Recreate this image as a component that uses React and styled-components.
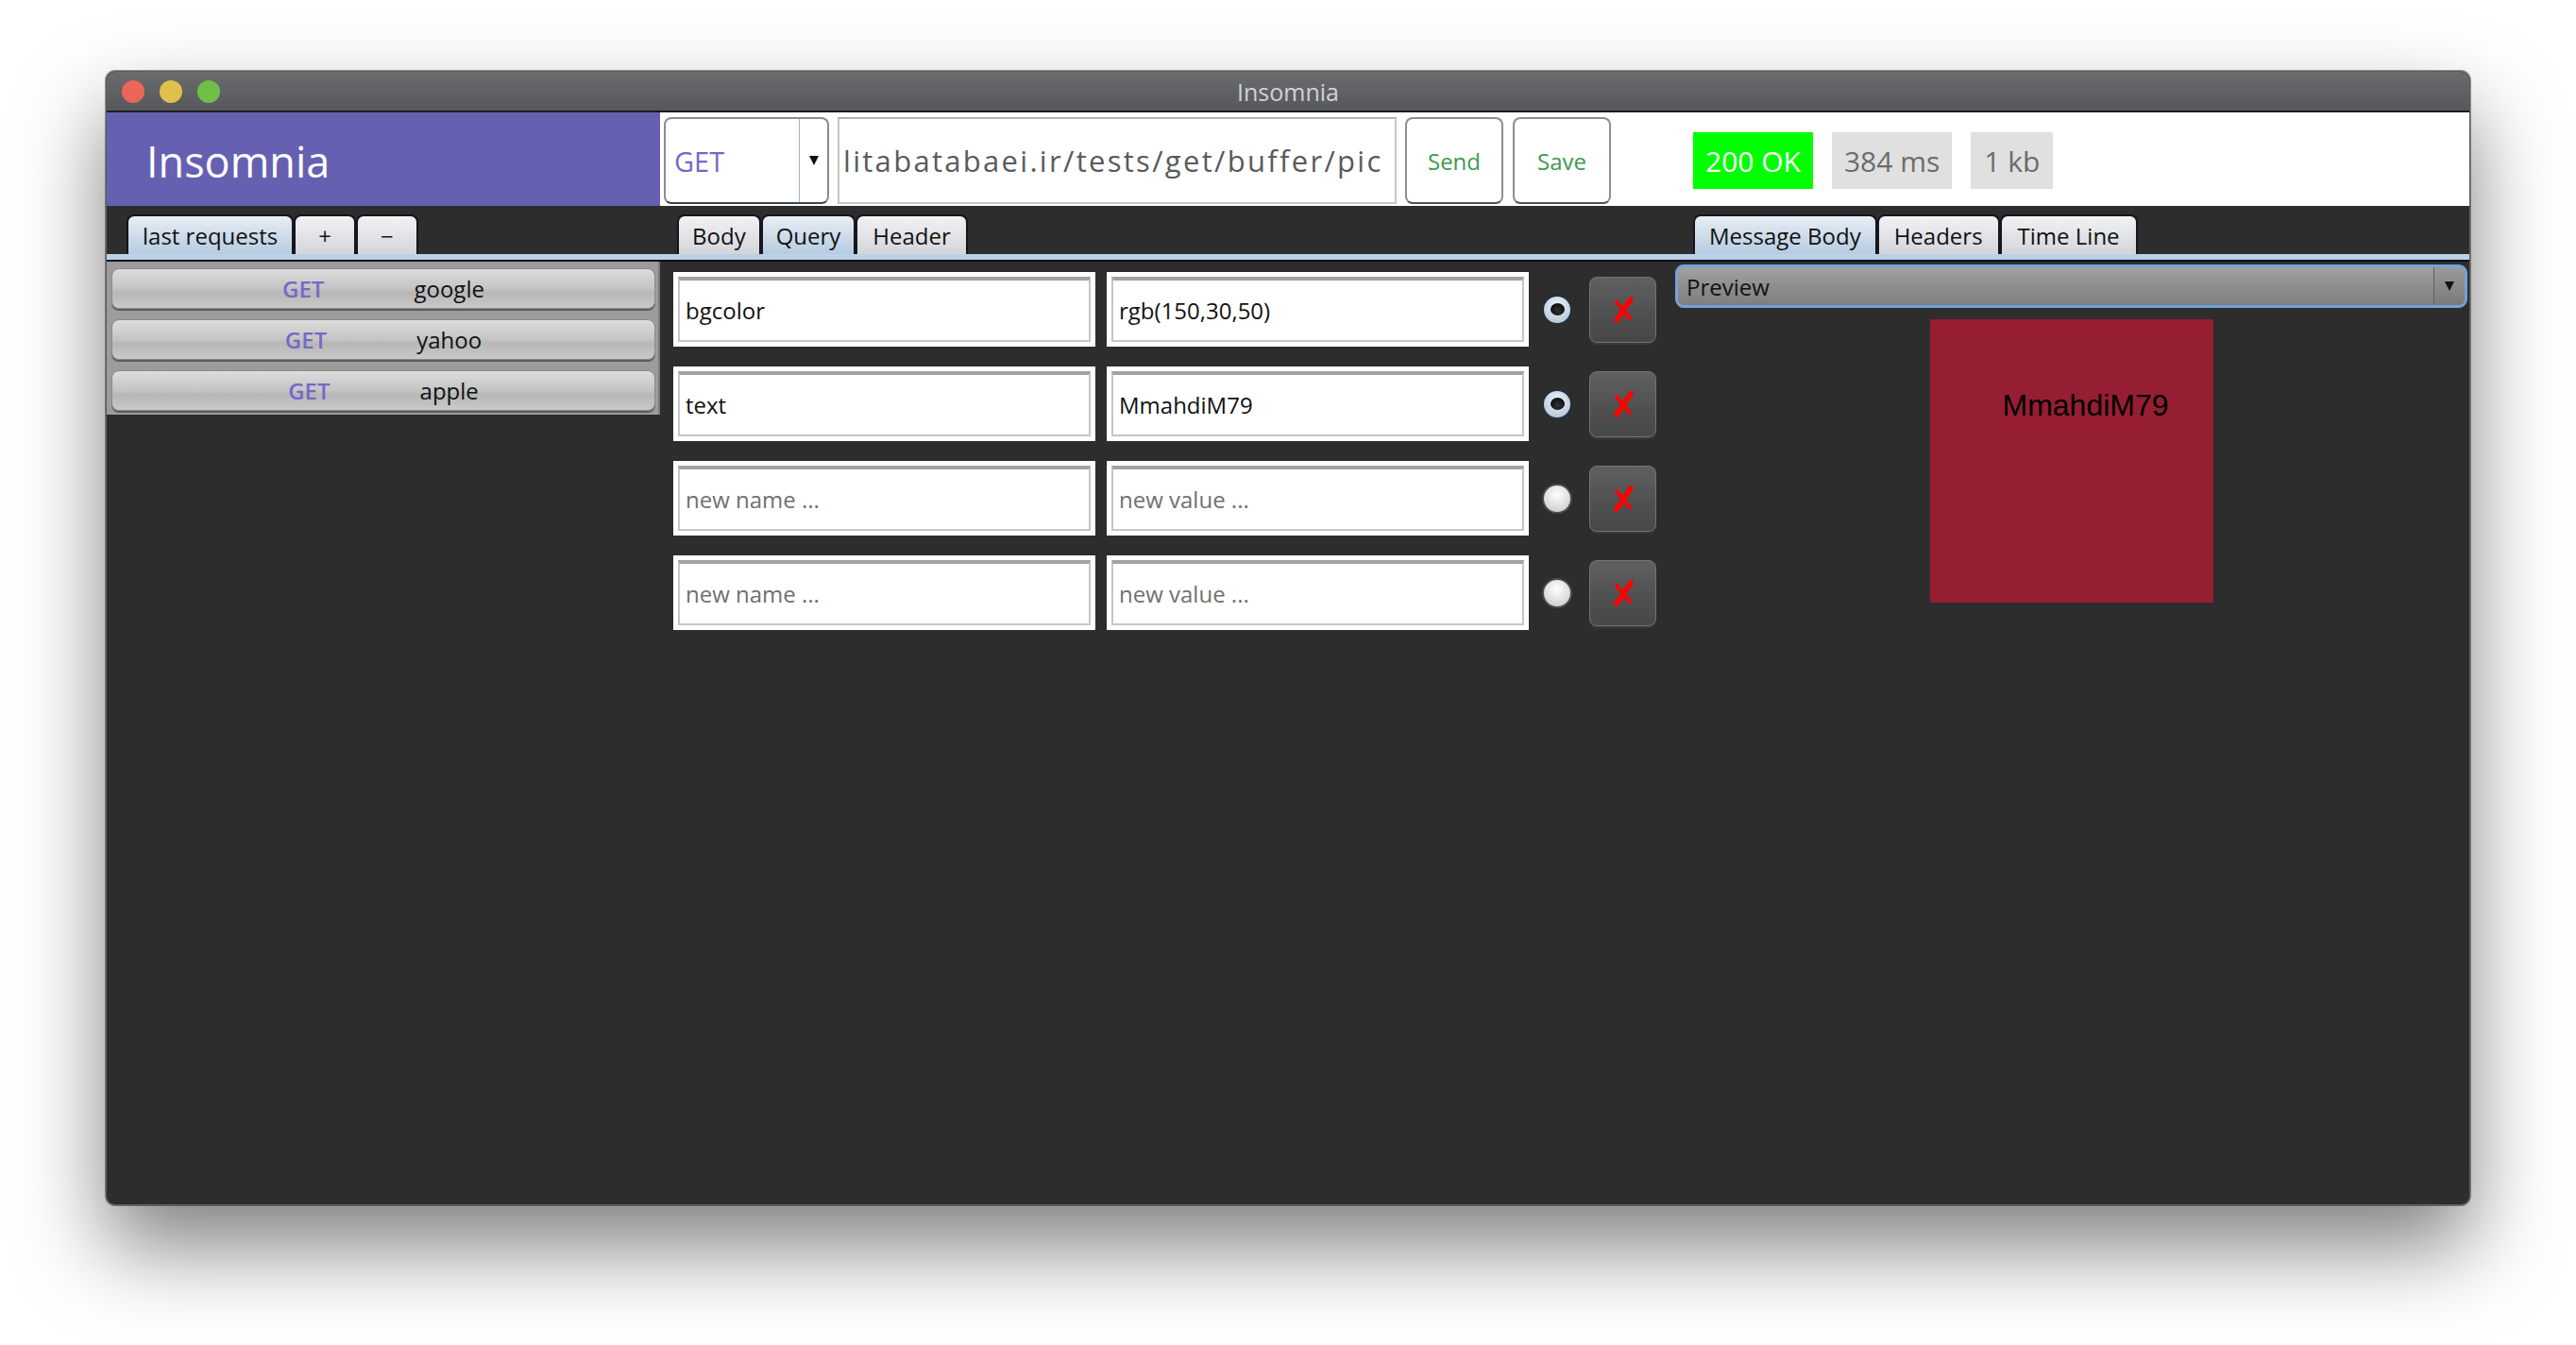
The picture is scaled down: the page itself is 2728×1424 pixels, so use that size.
import React from 'react';
import styled, { createGlobalStyle } from 'styled-components';

const GlobalStyle = createGlobalStyle`
  html, body {
    margin: 0;
    padding: 0;
    background: #ffffff;
  }
  * {
    box-sizing: border-box;
  }
`;

const Page = styled.div`
  width: 2728px;
  height: 1424px;
  padding: 75px 0 0 112px;
  background: #ffffff;
  overflow: hidden;
  font-family: 'Open Sans', 'Noto Sans', sans-serif;
`;

const Window = styled.div`
  width: 2504px;
  height: 1201px;
  display: flex;
  flex-direction: column;
  border-radius: 10px;
  overflow: hidden;
  background: #2d2d2d;
  border: 1px solid #5e5e5e;
  box-shadow: 0 44px 90px rgba(0, 0, 0, 0.5), 0 0 0 1px rgba(0, 0, 0, 0.4);
`;

const TitleBar = styled.div`
  height: 43px;
  flex-shrink: 0;
  display: grid;
  grid-template-columns: 1fr auto 1fr;
  align-items: center;
  padding: 0 16px;
  background: linear-gradient(#6b6c6e, #56575a);
  border-bottom: 2px solid #1c1c1c;
`;

const Lights = styled.div`
  display: flex;
  gap: 16px;
`;

const Light = styled.span`
  width: 24px;
  height: 24px;
  border-radius: 50%;
  background: ${(p) => p.$color};
`;

const WindowTitle = styled.span`
  color: #d2d2d2;
  font-size: 25px;
`;

const Header = styled.div`
  height: 99px;
  flex-shrink: 0;
  display: flex;
  background: #ffffff;
`;

const Brand = styled.div`
  width: 586px;
  display: flex;
  align-items: center;
  padding: 4px 0 0 42px;
  background: #6660b2;
  color: #ffffff;
  font-size: 45px;
`;

const RequestBar = styled.div`
  flex: 1;
  display: flex;
  align-items: center;
  padding: 3px 0 0 4px;
`;

const MethodCombo = styled.div`
  width: 175px;
  height: 92px;
  display: flex;
  align-items: center;
  border: 2px solid #8c8c8c;
  border-bottom-color: #3b4452;
  border-radius: 8px;
  background: #ffffff;
`;

const MethodText = styled.span`
  flex: 1;
  padding-left: 9px;
  color: #7468c8;
  font-size: 29px;
`;

const ComboArrowBox = styled.div`
  width: 30px;
  height: 100%;
  display: flex;
  align-items: center;
  justify-content: center;
  border-left: 1px solid #9fb3c8;
`;

const Arrow = styled.span`
  width: 0;
  height: 0;
  border-left: 5px solid transparent;
  border-right: 5px solid transparent;
  border-top: 10px solid #111111;
`;

const UrlField = styled.div`
  width: 592px;
  height: 92px;
  margin-left: 9px;
  display: flex;
  align-items: center;
  padding-left: 4px;
  border: 2px solid #c6c6c6;
  border-top-color: #b0b0b0;
  background: #ffffff;
  color: #5a5a5a;
  font-size: 31px;
  letter-spacing: 2.3px;
  white-space: nowrap;
  overflow: hidden;
`;

const ActionButton = styled.button`
  width: 104px;
  height: 92px;
  margin-left: ${(p) => p.$gap}px;
  border: 2px solid #8e8e8e;
  border-bottom-color: #505050;
  border-radius: 8px;
  background: #ffffff;
  color: #3c9a52;
  font-family: 'Open Sans', sans-serif;
  font-size: 24px;
  padding: 0;
`;

const Badge = styled.div`
  height: 60px;
  margin-left: ${(p) => p.$gap}px;
  padding: 0 ${(p) => p.$pad}px;
  display: flex;
  align-items: center;
  background: ${(p) => (p.$ok ? '#00ff00' : '#e0e0e0')};
  color: ${(p) => (p.$ok ? '#ffffff' : '#6b6b6b')};
  font-size: 30px;
`;

const Body = styled.div`
  flex: 1;
  display: flex;
  min-height: 0;
`;

const Pane = styled.div`
  width: ${(p) => (p.$width ? `${p.$width}px` : 'auto')};
  flex: ${(p) => (p.$width ? '0 0 auto' : '1')};
  display: flex;
  flex-direction: column;
`;

const TabStrip = styled.div`
  height: 51px;
  display: flex;
  align-items: flex-end;
  padding-left: ${(p) => p.$pad}px;
`;

const Tab = styled.div`
  height: 42px;
  padding: 0 ${(p) => p.$pad || 13}px;
  display: flex;
  align-items: center;
  border: 2px solid #15161e;
  border-bottom: none;
  border-radius: 8px 8px 0 0;
  background: ${(p) =>
    p.$active ? 'linear-gradient(#e8eef5, #b6cbe0)' : 'linear-gradient(#f2f2f4, #d4d5da)'};
  color: #111111;
  font-size: 24px;
  white-space: nowrap;
`;

const Band = styled.div`
  height: 8px;
  background: #bcd1e6;
  border-bottom: 2px solid #0f1016;
`;

const HistoryList = styled.div`
  display: flex;
  flex-direction: column;
  gap: 11px;
  padding: 7px 3px 4px 5px;
  background: #9c9c9c;
  border-right: 2px solid #7c7c7c;
`;

const HistoryButton = styled.div`
  height: 43px;
  display: flex;
  align-items: center;
  justify-content: center;
  gap: 95px;
  border: 1px solid #8a8a8a;
  border-radius: 8px;
  background: linear-gradient(#dcdcdc, #c4c4c4 50%, #b7b7b7 60%, #c9c9c9);
  box-shadow: 0 2px 0 #5c5c5c;
  font-size: 24px;
  color: #111111;
`;

const HistoryMethod = styled.span`
  color: #7469c8;
  font-weight: 600;
`;

const ParamList = styled.div`
  display: flex;
  flex-direction: column;
  gap: 21px;
  padding: 11px 0 0 14px;
`;

const ParamRow = styled.div`
  height: 79px;
  display: flex;
  align-items: center;
  gap: 12px;
`;

const FieldFrame = styled.div`
  width: 447px;
  height: 100%;
  padding: 5px;
  background: #ffffff;
`;

const FieldInner = styled.div`
  height: 100%;
  display: flex;
  align-items: center;
  padding-left: 6px;
  border: 2px solid #c6c6c6;
  border-top: 4px solid #a2a2a2;
  color: ${(p) => (p.$placeholder ? '#707070' : '#111111')};
  font-size: 24px;
`;

const Radio = styled.span`
  width: 32px;
  height: 32px;
  margin-left: 2px;
  display: flex;
  align-items: center;
  justify-content: center;
  border-radius: 50%;
  border: 2px solid ${(p) => (p.$checked ? '#23303e' : '#4c4c4c')};
  background: ${(p) =>
    p.$checked
      ? 'radial-gradient(circle at 50% 35%, #eef3f9, #a9bdd2)'
      : 'radial-gradient(circle at 50% 35%, #ffffff, #c4c4c8)'};
`;

const RadioDot = styled.span`
  width: 15px;
  height: 13px;
  border-radius: 50%;
  background: radial-gradient(circle at 50% 60%, #333, #000);
`;

const DeleteButton = styled.div`
  width: 71px;
  height: 70px;
  margin-left: 6px;
  display: flex;
  align-items: center;
  justify-content: center;
  border: 1px solid #747474;
  border-radius: 8px;
  background: linear-gradient(#606060, #4f4f4f 60%, #474747);
  box-shadow: 0 2px 0 #3a3a3a;
`;

const ResponseView = styled.div`
  display: flex;
  flex-direction: column;
  align-items: center;
  padding: 3px 2px 0 3px;
`;

const PreviewCombo = styled.div`
  width: 100%;
  height: 46px;
  display: flex;
  align-items: center;
  border: 3px solid #72a3d8;
  border-radius: 9px;
  background: linear-gradient(#a2a2a2, #8c8c8c 55%, #7f7f7f);
  color: #111111;
  font-size: 24px;
`;

const PreviewLabel = styled.span`
  flex: 1;
  padding-left: 9px;
`;

const PreviewArrow = styled.div`
  width: 33px;
  height: 100%;
  display: flex;
  align-items: center;
  justify-content: center;
  border-left: 1px solid #5f5f5f;
  background: linear-gradient(#9a9a9a, #7a7a7a);
  border-radius: 0 6px 6px 0;
`;

const HtmlPreview = styled.div`
  width: 300px;
  height: 300px;
  margin-top: 12px;
  padding: 73px 0 0 77px;
  background: rgb(150, 30, 50);
  color: #000000;
  font-family: 'Liberation Sans', Arial, sans-serif;
  font-size: 32px;
`;

const CrossIcon = () => (
  <svg width="24" height="28" viewBox="0 0 24 28">
    <path d="M5 6 L19 23" stroke="#ff0000" strokeWidth="4" strokeLinecap="round" />
    <path d="M20 3 L5 25" stroke="#ff0000" strokeWidth="5.5" strokeLinecap="round" />
  </svg>
);

const history = [
  { method: 'GET', name: 'google' },
  { method: 'GET', name: 'yahoo' },
  { method: 'GET', name: 'apple' },
];

const params = [
  { name: 'bgcolor', value: 'rgb(150,30,50)', on: true },
  { name: 'text', value: 'MmahdiM79', on: true },
  { name: '', value: '', on: false },
  { name: '', value: '', on: false },
];

const App = () => {
  return (
    <Page>
      <GlobalStyle />
      <Window>
        <TitleBar>
          <Lights>
            <Light $color='#ec6559' />
            <Light $color='#e0c04c' />
            <Light $color='#71bf46' />
          </Lights>
          <WindowTitle>Insomnia</WindowTitle>
          <span />
        </TitleBar>

        <Header>
          <Brand>Insomnia</Brand>
          <RequestBar>
            <MethodCombo>
              <MethodText>GET</MethodText>
              <ComboArrowBox>
                <Arrow />
              </ComboArrowBox>
            </MethodCombo>
            <UrlField>litabatabaei.ir/tests/get/buffer/pic</UrlField>
            <ActionButton $gap={9}>Send</ActionButton>
            <ActionButton $gap={10}>Save</ActionButton>
            <Badge $ok $gap={87} $pad={13}>200 OK</Badge>
            <Badge $gap={20} $pad={13}>384 ms</Badge>
            <Badge $gap={20} $pad={14}>1 kb</Badge>
          </RequestBar>
        </Header>

        <Body>
          <Pane $width={586}>
            <TabStrip $pad={21}>
              <Tab $active $pad={15}>last requests</Tab>
              <Tab $pad={24}>+</Tab>
              <Tab $pad={24}>−</Tab>
            </TabStrip>
            <Band />
            <HistoryList>
              {history.map((item) => (
                <HistoryButton key={item.name}>
                  <HistoryMethod>{item.method}</HistoryMethod>
                  <span>{item.name}</span>
                </HistoryButton>
              ))}
            </HistoryList>
          </Pane>

          <Pane $width={1072}>
            <TabStrip $pad={18}>
              <Tab $pad={14}>Body</Tab>
              <Tab $active $pad={14}>Query</Tab>
              <Tab $pad={16}>Header</Tab>
            </TabStrip>
            <Band />
            <ParamList>
              {params.map((p, i) => (
                <ParamRow key={i}>
                  <FieldFrame>
                    <FieldInner $placeholder={!p.name}>{p.name || 'new name ...'}</FieldInner>
                  </FieldFrame>
                  <FieldFrame>
                    <FieldInner $placeholder={!p.value}>{p.value || 'new value ...'}</FieldInner>
                  </FieldFrame>
                  <Radio $checked={p.on}>{p.on && <RadioDot />}</Radio>
                  <DeleteButton>
                    <CrossIcon />
                  </DeleteButton>
                </ParamRow>
              ))}
            </ParamList>
          </Pane>

          <Pane>
            <TabStrip $pad={22}>
              <Tab $active $pad={15}>Message Body</Tab>
              <Tab $pad={16}>Headers</Tab>
              <Tab $pad={17}>Time Line</Tab>
            </TabStrip>
            <Band />
            <ResponseView>
              <PreviewCombo>
                <PreviewLabel>Preview</PreviewLabel>
                <PreviewArrow>
                  <Arrow />
                </PreviewArrow>
              </PreviewCombo>
              <HtmlPreview>MmahdiM79</HtmlPreview>
            </ResponseView>
          </Pane>
        </Body>
      </Window>
    </Page>
  );
};

export default App;
